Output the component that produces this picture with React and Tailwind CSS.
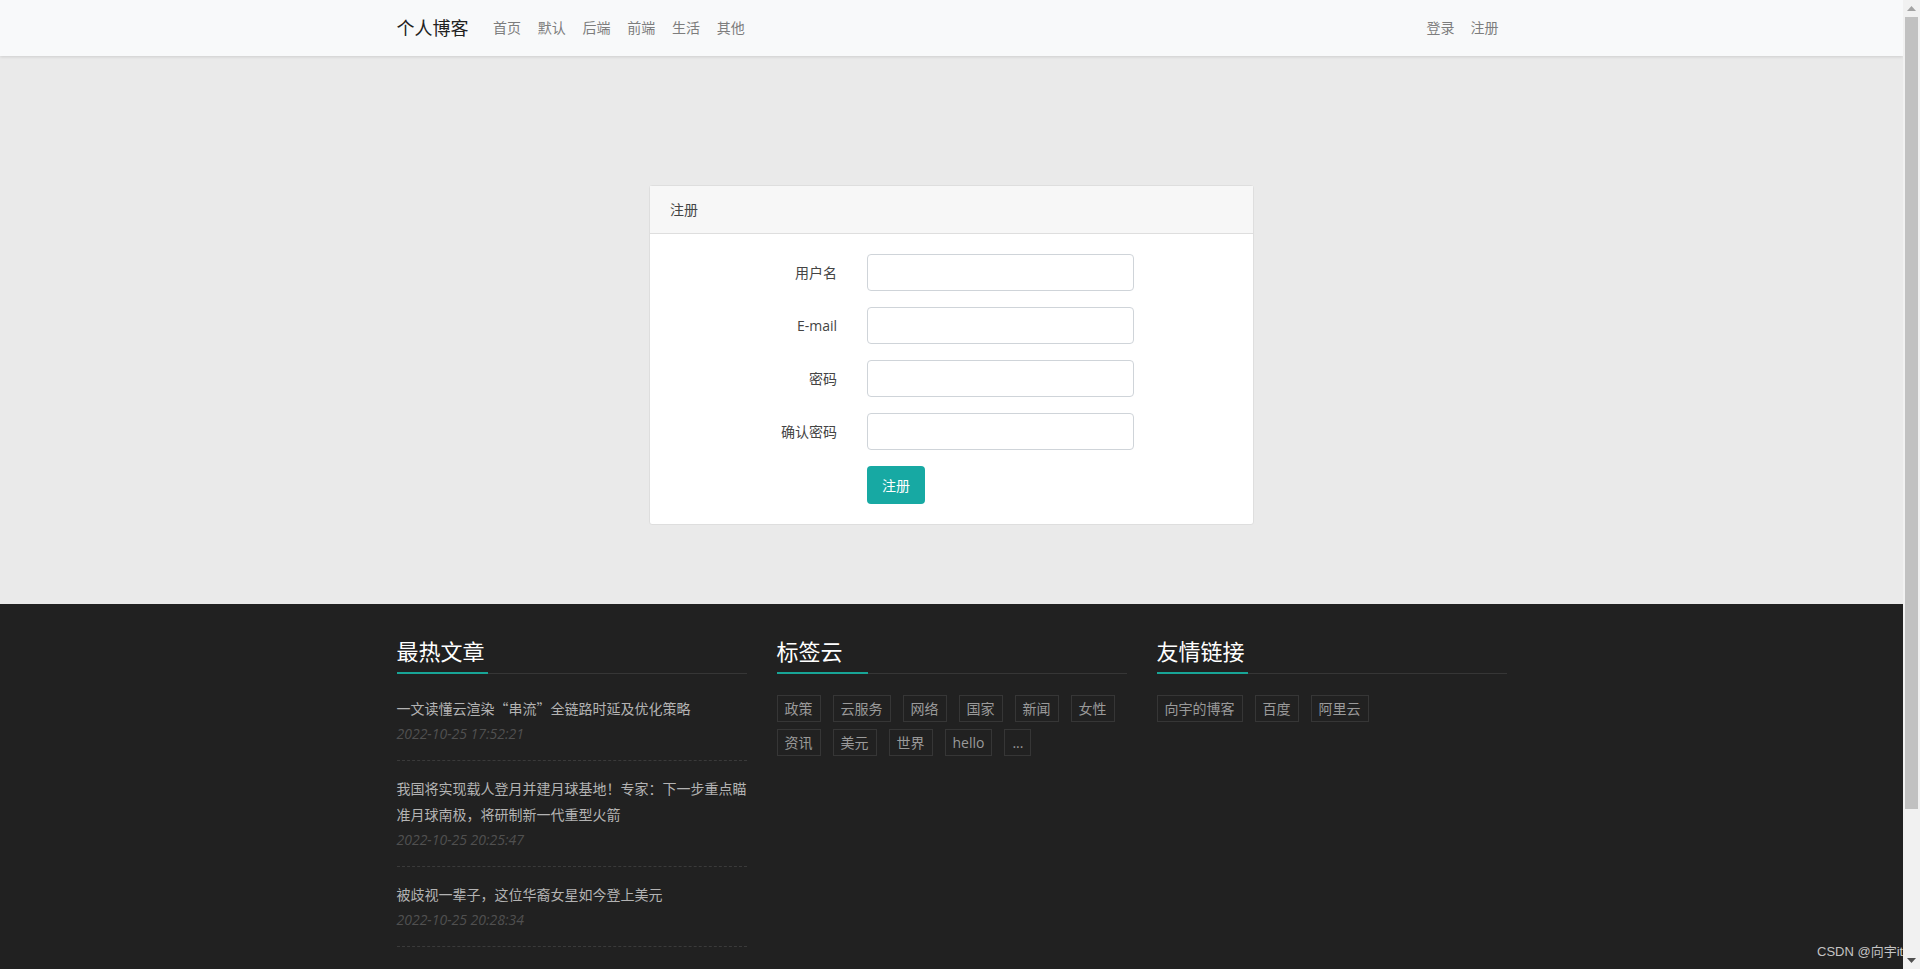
import React from "react";

const navLinks = ["首页", "默认", "后端", "前端", "生活", "其他"];
const articles = [
  { title: "一文读懂云渲染“串流”全链路时延及优化策略", date: "2022-10-25 17:52:21" },
  { title: "我国将实现载人登月并建月球基地！专家：下一步重点瞄准月球南极，将研制新一代重型火箭", date: "2022-10-25 20:25:47" },
  { title: "被歧视一辈子，这位华裔女星如今登上美元", date: "2022-10-25 20:28:34" },
];
const tags = ["政策", "云服务", "网络", "国家", "新闻", "女性", "资讯", "美元", "世界", "hello", "..."];
const friends = ["向宇的博客", "百度", "阿里云"];
const fields = ["用户名", "E-mail", "密码", "确认密码"];

function FooterHeading({ children }) {
  return (
    <h4 className="border-b border-[#363636] text-[22px] leading-[30px] font-normal text-white">
      <span className="inline-block w-[91px] whitespace-nowrap pb-[6px] border-b-2 border-[#18a597] -mb-px">
        {children}
      </span>
    </h4>
  );
}

function Tag({ children }) {
  return (
    <a className="flex h-[27px] items-center border border-[#363636] px-[7px] text-[14px] text-[#9a9a9a] whitespace-nowrap">
      {children}
    </a>
  );
}

export default function App() {
  return (
    <div className="flex h-[969px] w-[1920px] overflow-hidden font-['Open_Sans','Noto_Sans_CJK_SC',sans-serif]">
      <div className="relative h-full w-[1903px] overflow-hidden bg-[#eaeaea]">
        <nav className="relative z-10 h-[56px] bg-[#f8f9fa] shadow-[0_1px_3px_rgba(0,0,0,0.12)]">
          <div className="mx-auto flex h-full w-[1140px] items-center px-[15px]">
            <a className="mr-[16px] text-[18px] leading-[28px] text-[#222]">个人博客</a>
            <ul className="flex">
              {navLinks.map((l) => (
                <li key={l} className="px-[8.4px] text-[14px] leading-[22px] text-[#7d7d7d]">
                  {l}
                </li>
              ))}
            </ul>
            <ul className="ml-auto flex">
              {["登录", "注册"].map((l) => (
                <li key={l} className="px-[8px] text-[14px] leading-[22px] text-[#7d7d7d]">
                  {l}
                </li>
              ))}
            </ul>
          </div>
        </nav>

        <main className="pt-[129px] pb-[79px]">
          <div className="mx-auto w-[605px] rounded-[3px] border border-[#dedede] bg-white">
            <div className="flex h-[48px] items-center border-b border-[#dedede] bg-[#f7f7f7] px-[20px] text-[14px] text-[#444]">
              注册
            </div>
            <div className="p-[20px]">
              {fields.map((f) => (
                <div key={f} className="mb-[16px] flex items-center gap-[30px]">
                  <label className="w-[167px] text-right text-[14px] text-[#444]">{f}</label>
                  <input
                    type={f.includes("密码") ? "password" : "text"}
                    className="h-[37px] w-[267px] rounded-[4px] border border-[#cfd4d9] bg-white px-[12px] text-[14px] outline-none"
                  />
                </div>
              ))}
              <div className="flex gap-[30px]">
                <div className="w-[167px]" />
                <button className="h-[38px] rounded-[4px] bg-[#17a9a3] px-[15px] text-[14px] text-white">
                  注册
                </button>
              </div>
            </div>
          </div>
        </main>

        <footer className="min-h-[600px] bg-[#212121] pt-[32px]">
          <div className="mx-auto grid w-[1110px] grid-cols-3 gap-[30px]">
            <div>
              <FooterHeading>最热文章</FooterHeading>
              <ul className="mt-[7px]">
                {articles.map((a) => (
                  <li key={a.date} className="border-b border-dashed border-[#3a3a3a] pt-[14px] pb-[13px]">
                    <div className="font-['Noto_Sans_CJK_SC',sans-serif] text-[14px] leading-[26px] text-[#b3b3b3]">
                      {a.title}
                    </div>
                    <div className="text-[14px] italic leading-[26px] text-[#505050]">{a.date}</div>
                  </li>
                ))}
              </ul>
            </div>
            <div>
              <FooterHeading>标签云</FooterHeading>
              <div className="mt-[21px] flex flex-wrap gap-x-[12px] gap-y-[7px]">
                {tags.map((t) => (
                  <Tag key={t}>{t}</Tag>
                ))}
              </div>
            </div>
            <div>
              <FooterHeading>友情链接</FooterHeading>
              <div className="mt-[21px] flex flex-wrap gap-x-[12px] gap-y-[7px]">
                {friends.map((t) => (
                  <Tag key={t}>{t}</Tag>
                ))}
              </div>
            </div>
          </div>
        </footer>

        <div className="absolute left-[1817px] top-[943px] whitespace-nowrap text-[13px] leading-[17px] text-[#c4c4c4] font-['Liberation_Sans','Noto_Sans_CJK_SC',sans-serif]">
          CSDN @向宇it
        </div>
      </div>

      <div className="flex h-full w-[17px] flex-col bg-[#f1f1f1]">
        <div className="flex h-[17px] items-center justify-center">
          <svg width="9" height="5" viewBox="0 0 9 5">
            <path d="M0 5 L4.5 0 L9 5 Z" fill="#a3a3a3" />
          </svg>
        </div>
        <div className="mx-[2px] h-[792px] bg-[#c1c1c1]" />
        <div className="flex-1" />
        <div className="flex h-[17px] items-center justify-center">
          <svg width="9" height="5" viewBox="0 0 9 5">
            <path d="M0 0 L9 0 L4.5 5 Z" fill="#505050" />
          </svg>
        </div>
      </div>
    </div>
  );
}
